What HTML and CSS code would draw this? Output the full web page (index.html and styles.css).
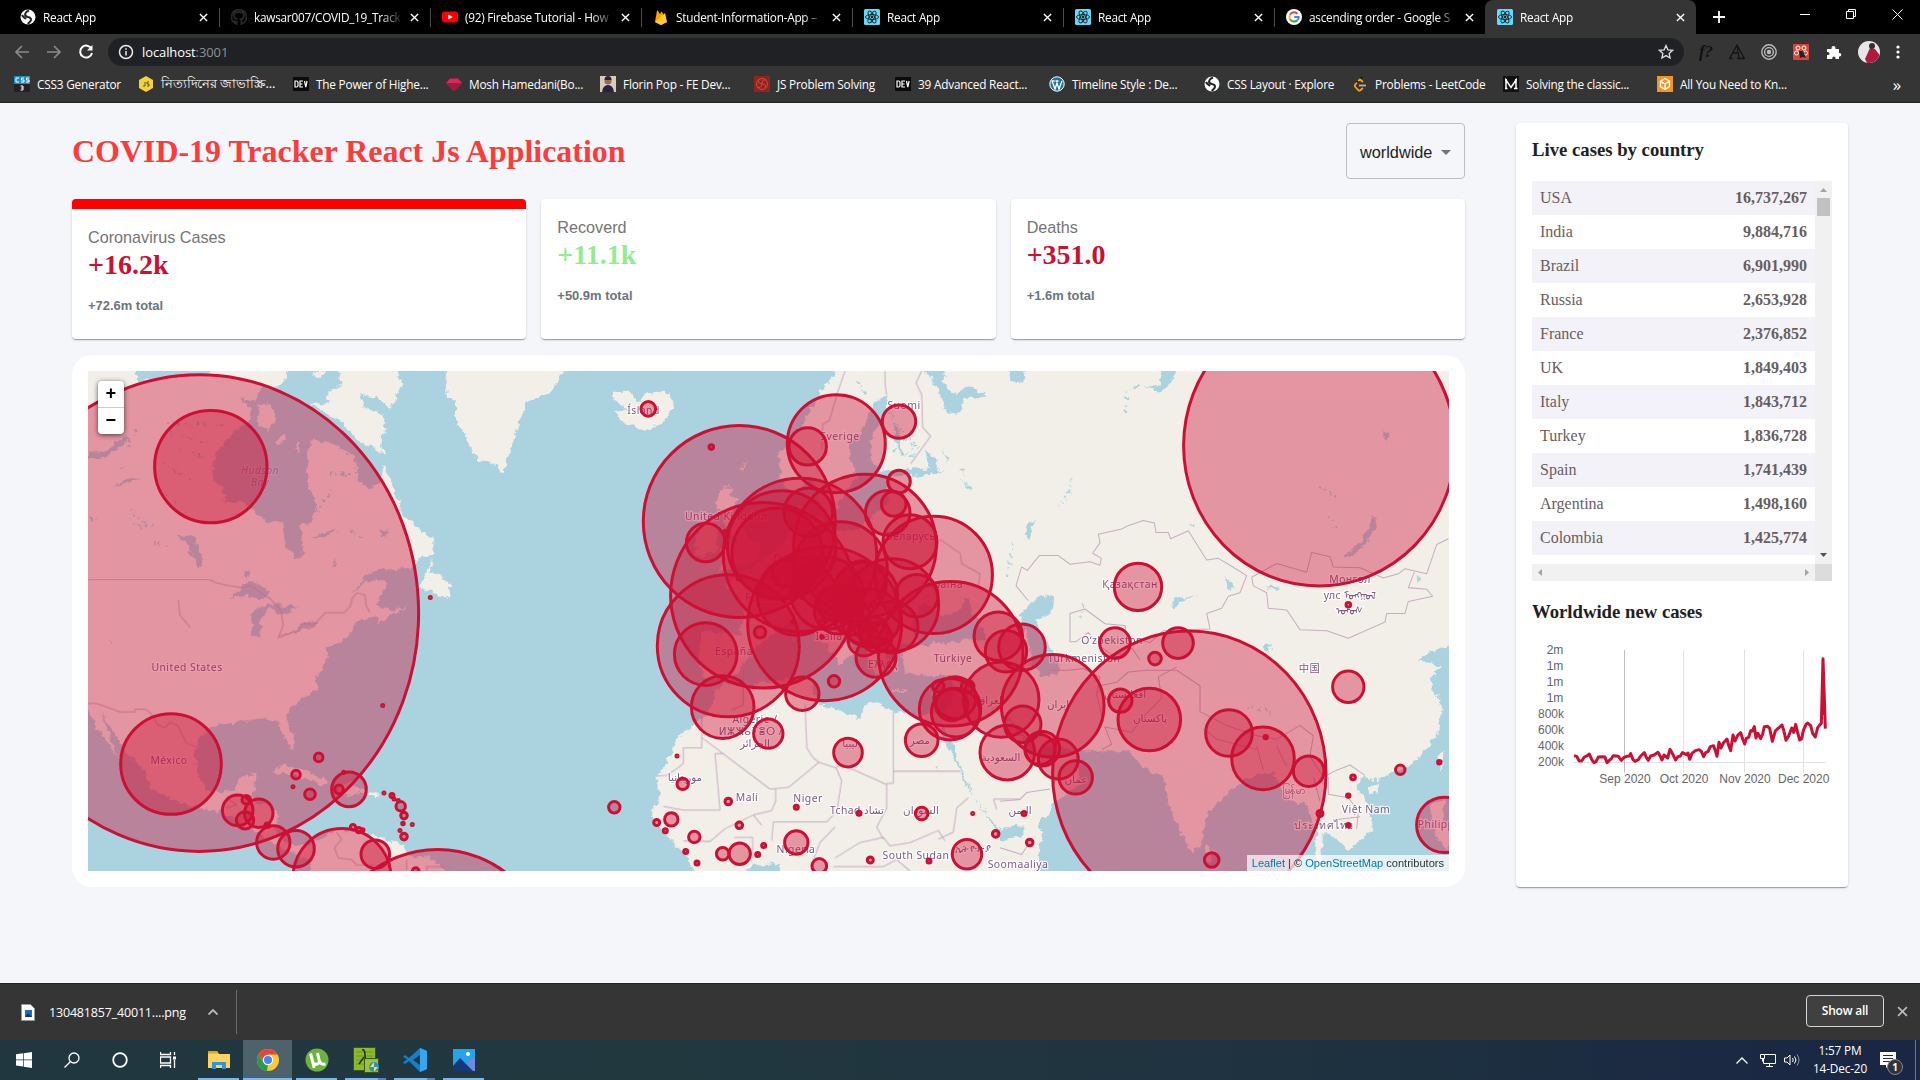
FILE: index.html
```html
<!DOCTYPE html>
<html lang="en">
<head>
<meta charset="utf-8">
<title>React App</title>
<link rel="stylesheet" href="styles.css">
</head>
<body>
<svg width="0" height="0" class="defs">
  <symbol id="react" viewBox="0 0 16 16"><rect width="16" height="16" rx="1.5" fill="#61dafb"/><g fill="none" stroke="#20232a" stroke-width=".9"><ellipse cx="8" cy="8" rx="6.6" ry="2.5"/><ellipse cx="8" cy="8" rx="6.6" ry="2.5" transform="rotate(60 8 8)"/><ellipse cx="8" cy="8" rx="6.6" ry="2.5" transform="rotate(120 8 8)"/></g><circle cx="8" cy="8" r="1.4" fill="#20232a"/></symbol>
  <symbol id="globe" viewBox="0 0 16 16"><circle cx="8" cy="8" r="7.5" fill="#fff"/><path d="M9 1.5C5 3 4 6 6.500 7.500c2 1 5 .5 4.500 3.500-.5 2-2.500 3-3 4M2 6c1 2 3 3 4 4" fill="none" stroke="#222" stroke-width="2"/></symbol>
  <symbol id="dev" viewBox="0 0 16 16"><rect y="1" width="16" height="14" fill="#0a0a0a"/><path d="M2 5v6h1.500q1.500 0 1.500-1.500v-3Q5 5 3.500 5zM10 5H7v6h3M7 8h2.500M11.500 5l1.300 6 1.300-6" fill="none" stroke="#fff" stroke-width="1.200"/></symbol>
  <symbol id="x" viewBox="0 0 10 10"><path d="M1 1l8 8M9 1l-8 8" stroke="currentColor" stroke-width="1.500"/></symbol>
</svg>

<header class="browser">
  <div class="tabs">
    <div class="tab"><svg class="fav"><use href="#globe"/></svg><span>React App</span><svg class="close"><use href="#x"/></svg></div>
    <div class="tab"><svg class="fav" viewBox="0 0 16 16"><path d="M8 .5a7.500 7.500 0 0 0-2.400 14.600v-2.200c-2 .4-2.600-1-3-1.700M8 .5a7.500 7.500 0 0 1 2.400 14.600v-3c0-.9-.3-1.400-.7-1.700C12 10 13 9 13 6.800c0-1-.3-1.800-.9-2.400V2.500L10 3.300a7 7 0 0 0-4 0L3.900 2.500v1.900C3.300 5 3 5.800 3 6.800 3 9 4 10 6.300 10.400" fill="none" stroke="#24292e" stroke-width="1.800"/></svg><span>kawsar007/COVID_19_Track</span><svg class="close"><use href="#x"/></svg></div>
    <div class="tab"><svg class="fav" viewBox="0 0 16 16"><rect y="2.500" width="16" height="11" rx="3" fill="#f00"/><path d="M6.300 5.500v5l4.400-2.500z" fill="#fff"/></svg><span>(92) Firebase Tutorial - How</span><svg class="close"><use href="#x"/></svg></div>
    <div class="tab"><svg class="fav" viewBox="0 0 16 16"><path d="M2 13L4 1.500q.3-.6.7 0L7 5l1.300-2.300q.4-.5.700 0L14 13l-6 3z" fill="#ffa000"/><path d="M2 13l9.500-8.500q.6-.4.8.2L14 13l-6 3z" fill="#ffca28"/></svg><span>Student-Information-App –</span><svg class="close"><use href="#x"/></svg></div>
    <div class="tab"><svg class="fav"><use href="#react"/></svg><span>React App</span><svg class="close"><use href="#x"/></svg></div>
    <div class="tab"><svg class="fav"><use href="#react"/></svg><span>React App</span><svg class="close"><use href="#x"/></svg></div>
    <div class="tab"><svg class="fav" viewBox="0 0 16 16"><circle cx="8" cy="8" r="8" fill="#fff"/><g fill="none" stroke-width="2"><path d="M11.500 4.800A4.700 4.700 0 0 0 4 5.700" stroke="#ea4335"/><path d="M4 5.700a4.700 4.700 0 0 0 0 4.600" stroke="#fbbc05"/><path d="M4 10.300a4.700 4.700 0 0 0 7.300 1" stroke="#34a853"/><path d="M11.300 11.300A4.500 4.500 0 0 0 12.700 8H8.200" stroke="#4285f4"/></g></svg><span>ascending order - Google S</span><svg class="close"><use href="#x"/></svg></div>
    <div class="tab active"><svg class="fav"><use href="#react"/></svg><span>React App</span><svg class="close"><use href="#x"/></svg></div>
    <svg class="plus" viewBox="0 0 12 12"><path d="M6 0v12M0 6h12" stroke="#fff" stroke-width="1.800"/></svg>
    <div class="window-controls">
      <svg width="10" height="10"><path d="M0 5.500h10" stroke="#fff"/></svg>
      <svg width="10" height="10" fill="none" stroke="#fff"><path d="M.5 2.500h7v7h-7zM2.500 2.500v-2h7v7h-2"/></svg>
      <svg width="11" height="11"><path d="M.5.5l10 10M10.500.5l-10 10" stroke="#fff"/></svg>
    </div>
  </div>
  <div class="toolbar">
    <svg width="16" height="16" fill="none" stroke="#8a8a8a" stroke-width="1.700"><path d="M15 8H2M8 2L2 8l6 6"/></svg>
    <svg width="16" height="16" fill="none" stroke="#8a8a8a" stroke-width="1.700"><path d="M1 8h13M8 2l6 6-6 6"/></svg>
    <svg width="16" height="16" fill="none" stroke="#fff" stroke-width="2"><path d="M13.500 4.800A6 6 0 1 0 14 9"/><path d="M14.500 1v5.500H9z" fill="#fff" stroke="none"/></svg>
    <div class="omnibox">
      <svg width="16" height="16" fill="none" stroke="#e8eaed" stroke-width="1.500"><circle cx="8" cy="8" r="6.500"/><path d="M8 7v4.500M8 4.300v1.500"/></svg>
      <span class="url">localhost<i>:3001</i></span>
      <svg width="16" height="16" fill="none" stroke="#dcdcdc" stroke-width="1.300"><path d="M8 1.500l1.900 4.300 4.700.5-3.500 3.100 1 4.600L8 11.600 3.900 14l1-4.600L1.400 6.300l4.700-.5z"/></svg>
    </div>
    <div class="extensions">
      <b class="ext-f">f?</b>
      <svg width="16" height="16" fill="none" stroke="#151515" stroke-width="1.300"><path d="M1 14L8 1l2 13M4 9h5M8 1l7 13M0 14.500h4M8 14.500h8"/></svg>
      <svg width="16" height="16" fill="none" stroke="#bbb" stroke-width="1.400"><circle cx="8" cy="8" r="7.200"/><circle cx="8" cy="8" r="4.400"/><circle cx="8" cy="8" r="1.500" fill="#bbb"/></svg>
      <svg width="16" height="16"><rect width="16" height="16" rx="1" fill="#db4437"/><g fill="none" stroke="#fff"><circle cx="5" cy="4" r="2"/><circle cx="11" cy="4" r="2"/><circle cx="3.500" cy="9" r="2"/><circle cx="12.500" cy="9" r="2"/></g><path d="M6 7l4 0 3 7-3-1-3 1z" fill="#222"/></svg>
      <svg width="16" height="16" fill="#fff"><path d="M1 5h4.500V4a2 2 0 1 1 4 0v1H13v4h.500a1.800 1.800 0 0 1 0 3.600H13V15H9.500v-1a1.600 1.600 0 0 0-3.200 0v1H1v-4h1a1.500 1.500 0 0 0 0-3H1z"/></svg>
      <svg width="22" height="22" viewBox="0 0 22 22"><circle cx="11" cy="11" r="11" fill="#e7e5ea"/><path d="M12 7l5 1 4.500 6a11 11 0 0 1-12.500 7.800L7 18z" fill="#b3183f"/><circle cx="14" cy="5" r="3" fill="#3c2c2c"/></svg>
      <svg width="4" height="16" fill="#fff"><circle cx="2" cy="3" r="1.600"/><circle cx="2" cy="8" r="1.600"/><circle cx="2" cy="13" r="1.600"/></svg>
    </div>
  </div>
  <nav class="bookmarks">
    <a><svg viewBox="0 0 16 16"><rect width="16" height="8" fill="#1e8fc0"/><rect y="8" width="16" height="8" fill="#222"/><path d="M5 2H2v4h3M10 2H7.500v2H10v2H7M15 2h-2.500v2H15v2h-3M6.500 10H9v4H6.500M7 12h2" fill="none" stroke="#fff"/></svg>CSS3 Generator</a>
    <a class="bn"><svg viewBox="0 0 16 16"><path d="M8 0l7 4v8l-7 4-7-4V4z" fill="#f2d43a"/><path d="M7 6v4H5M11 6H9v2h2v2H9" fill="none" stroke="#554"/></svg>নিত্যদিনের জাভাস্ক্রি...</a>
    <a><svg><use href="#dev"/></svg>The Power of Highe...</a>
    <a><svg viewBox="0 0 16 16"><path d="M4 2.500h8L16 7l-8 8-8-8z" fill="#e0245e"/><path d="M0 7h16L8 15z" fill="#a5183f"/></svg>Mosh Hamedani(Bo...</a>
    <a><svg viewBox="0 0 16 16"><rect width="16" height="16" fill="#d8cbb8"/><circle cx="8" cy="5" r="3.500" fill="#9a6b50"/><path d="M2 16q1-7 6-7t6 7zM4.500 4q0-4 3.500-4t3.500 4z" fill="#2b2140"/></svg>Florin Pop - FE Dev...</a>
    <a><svg viewBox="0 0 16 16"><rect width="16" height="16" fill="#8e2620"/><g fill="none" stroke="#d8443a"><circle cx="8" cy="8" r="5.500"/><path d="M8 8q0-5 4-4M8 8q5 0 3 4M8 8q-1 5-5 3M8 8Q3 7 5 3"/></g></svg>JS Problem Solving</a>
    <a><svg><use href="#dev"/></svg>39 Advanced React...</a>
    <a><svg viewBox="0 0 16 16"><circle cx="8" cy="8" r="7.200" fill="#21759b" stroke="#fff"/><path d="M3 5l3 8 2-6 2 6 3-8M2.500 5h3M6.500 5h3" fill="none" stroke="#fff" stroke-width="1.300"/></svg>Timeline Style : De...</a>
    <a><svg><use href="#globe"/></svg>CSS Layout · Explore</a>
    <a><svg viewBox="0 0 16 16" fill="none" stroke-width="1.800"><path d="M10 1L4 7.500" stroke="#111"/><path d="M5 6.500L3 9q-.5 1 .3 2l3 3.200q1 .8 2 0L11 12M6 5l2-1.500 3 2.500" stroke="#f89f1b"/><path d="M7 9.500h7" stroke="#b3b3b3"/></svg>Problems - LeetCode</a>
    <a><svg viewBox="0 0 16 16"><rect width="16" height="16" fill="#111"/><path d="M3 12.500V4l5 7.500L13 4v8.500M2 12.500h2.500M11 12.500h3.500M2 3.700h2M12 3.700h2" fill="none" stroke="#fff" stroke-width="1.500"/></svg>Solving the classic...</a>
    <a><svg viewBox="0 0 16 16"><rect width="16" height="16" fill="#f7931e"/><path d="M8 2.500l4.500 2.700v5.500L8 13.500l-4.500-2.800V5.200zM4 5.500L8 8l4-2.500M8 8v5" fill="none" stroke="#fff" stroke-width="1.400"/></svg>All You Need to Kn...</a>
    <span class="more">»</span>
  </nav>
</header>

<main class="app">
  <section class="left">
    <div class="app-header">
      <h1>COVID-19 Tracker React Js Application</h1>
      <div class="dropdown">worldwide<svg width="10" height="5"><path d="M0 0h10L5 5z" fill="#757575"/></svg></div>
    </div>
    <div class="stats">
      <article class="card selected"><p>Coronavirus Cases</p><h2>+16.2k</h2><h6>+72.6m total</h6></article>
      <article class="card"><p>Recoverd</p><h2 class="green">+11.1k</h2><h6>+50.9m total</h6></article>
      <article class="card"><p>Deaths</p><h2>+351.0</h2><h6>+1.6m total</h6></article>
    </div>
    <div class="map-card">
      <div class="map">
        <svg class="world" viewBox="88 371 1361 500">
          <defs><filter id="rough" filterUnits="userSpaceOnUse" x="80" y="360" width="1380" height="520"><feTurbulence type="fractalNoise" baseFrequency=".16" numOctaves="3" seed="4"/><feDisplacementMap in="SourceGraphic" scale="8" xChannelSelector="R" yChannelSelector="G"/></filter></defs>
          <g filter="url(#rough)">
            <g transform="translate(70 350) scale(.33333 .34439)">
              <g class="land">
                <path d="M0,20H185L205,95 240,85 300,80 400,75 530,20H655L650,85 610,110 700,150 860,300 935,380 940,335 965,390 1000,480 1060,530 1090,550 1090,590 1040,612 1030,632 905,640 840,710 880,675 940,665 945,690 920,740 960,760 1020,740 925,795 915,770 860,790 835,835 775,865 765,910 735,960 745,980 700,1010 660,1040 650,1070 675,1130 670,1165 640,1120 625,1080 570,1070 515,1080 425,1090 390,1120 375,1180 380,1230 410,1275 440,1285 490,1275 510,1240 560,1230 555,1270 540,1300 560,1315 600,1320 622,1345 615,1400 650,1430 700,1440 750,1425 800,1392 860,1398 950,1420 1000,1440 1010,1470 1080,1470 1150,1540H720L725,1475 690,1470 620,1440 560,1400 480,1350 400,1330 330,1315 240,1270 225,1220 170,1170 130,1110 90,1045 130,1150 150,1190 110,1140 54,1050 0,1040z"/>
                <path d="M725,60h40l-8,18h-25zM800,50H970L997,100 960,172 920,140 870,128 880,160 940,190 950,230 930,258 942,302 860,262 820,210 722,157 780,152 770,128 815,100z"/>
                <path d="M1123,50L1130,130 1155,150 1155,190 1200,280 1225,325 1260,320 1300,357 1320,290 1345,220 1370,150 1440,125 1465,90 1485,50z"/>
                <path d="M1090,600L1045,690 1090,705 1142,722 1140,690 1110,655 1078,642zM600,1225L650,1203 700,1220 782,1256 755,1262 690,1235zM800,1265l40-10 45,30-75,10zM897,1285h26v10h-26z"/>
              </g>
              <g class="water">
                <path d="M498,235L540,205 545,175 510,140 555,150 575,110 620,112 700,150 760,190 840,260 900,320 935,380 895,405 860,375 855,315 820,290 770,265 720,265 710,330 720,400 738,450 725,500 690,510 702,560 695,600 680,605 650,575 640,500 600,500 550,470 520,440 465,445 460,400 430,385 428,330 450,280z"/>
                <path d="M475,720L540,670 600,700 590,722 520,715zM545,830L548,760 590,738 680,745 640,775 600,745 575,770 570,830zM620,835l70-28 3-12 50-8-10 15zM320,540l50-5 28,75-10,22-40-70zM54,295l50,0 60,-45 20,8-80,55-50,8zM525,640h14v16h-14zM115,840l16,12-4,8zM125,400l50-30 35,4-50,15zM720,545l60-20 30-8-40,25zM780,630l20-25-5,15zM925,520l30,5-10,20z"/>
              </g>
              <path class="lakes" d="M290,210l190,10M300,240l120,30M330,290l80,20M280,330l90,50M290,420l40,30M180,460l60,60M150,340l10,0M200,230l-30,60M190,510l60,0M740,470l50,-70M840,520l40,30M930,540l30,-20M780,360l70,0M60,490l30,3M250,560l50,10"/>
              <path class="land" d="M565,160l30-5 25,40-25,40-30-15zM615,265l25-20 5,15-20,15zM676,270h12v25h-10z"/>
            </g>
            <g transform="translate(540 350) scale(.33333 .34439)">
              <g class="land">
                <path d="M220,115L270,122 292,150 320,125 380,118 402,165 370,210 310,232 250,210 225,180 265,172 225,150z"/>
                <path d="M548,396L525,450 548,480 560,520 595,560 540,580 560,610 539,640 600,628 656,610 662,565 620,540 602,500 575,475 600,430 570,425 575,398zM463,600L530,590 532,510 500,493 465,540zM605,350l12-30-4,35z"/>
                <path d="M895,45L873,80 838,130 786,217 718,300 722,380 752,415 790,400 812,366 829,415 846,475 873,490 900,440 950,366 930,320 930,270 975,220 1000,150 1043,135 1030,190 992,260 992,320 1026,352 1145,342 1145,360 1043,369 1043,445 957,520 838,531 846,485 800,490 779,445 769,504 730,560 664,614 606,648 553,680 600,720 613,774 600,825 485,815 475,902 490,950 537,958 590,942 627,885 671,844 725,801 785,776 843,835 903,917 915,900 947,874 865,795 843,753 860,752 906,797 964,841 985,900 1008,948 1043,921 1026,863 1080,855 1128,852 1111,801 1154,729 1213,774 1256,755 1282,713 1300,760 1343,840 1248,841 1128,860 1080,880 1094,938 1154,948 1239,946 1237,1000 1218,1049 1140,1060 1050,1045 1010,1020 980,1025 960,1070 880,1040 835,1030 815,985 825,952 780,950 700,962 600,975 545,965 500,1060 430,1110 400,1150 380,1200 345,1240 360,1290 340,1340 340,1370 380,1410 430,1460 480,1540H1500V40z"/>
                <path d="M1170,992h35v8h-30zM1050,985h50v8h-45zM757,790l12,30-8,20-8-15z"/>
              </g>
              <g class="water">
                <path d="M1205,1080L1232,1130 1268,1225 1300,1300 1375,1385 1450,1380V1415L1380,1420 1355,1372 1292,1290 1250,1200 1200,1115zM590,1540L640,1495 712,1490 730,1540z"/>
                <path d="M1145,50L1200,115 1215,180 1255,185 1272,140 1340,132 1285,105 1240,130 1205,90 1215,50zM1155,290l30,30 10,30-30-10zM1100,345l80,0 30,10-80,10zM1060,205l20,40 8,70-18-40zM1210,285l15,30-5,12zM1250,345l30,0-10,15zM1275,385l22,18-8,8zM1400,50h25l5,40-20,-5z"/>
                <path d="M1130,852l40-8 60,-8 60,6-70,8zM1265,375l15,18 15,12-12,4z"/>
              </g>
              <path class="lakes" d="M1050,180l50,90M1080,230l60,60M1110,270l20,50M950,90l30,40M1060,290l60,20M1410,610l10,40M1190,1210l-10,10"/>
            </g>
            <g transform="translate(1000 350) scale(.33333 .34439)">
              <g class="land">
                <path d="M0,40H1400V850L1290,875 1260,900 1320,920 1290,960 1330,1040 1310,1120 1240,1200 1130,1250 1085,1240 1070,1270 1110,1330 1118,1390 1045,1455 1000,1410 965,1400 965,1540H945L950,1400 915,1310 890,1320 850,1290 820,1225 740,1240 700,1275 625,1340 600,1440 575,1462 510,1340 490,1235 430,1215 390,1165 300,1165 225,1160 240,1260 165,1310 150,1350 0,1395z"/>
                <path d="M-10,1425L130,1398 120,1450 60,1540H-10zM1105,1270l35-12-10,25-22,8zM1310,1185l22-20-10,55zM615,1440l20,10-5,35-18-10zM1290,1320l45-15-5,60 30,50-20,40-40-60z"/>
              </g>
              <g class="water">
                <path d="M55,770L120,713 165,720 150,765 110,785 120,830 150,860 175,900 175,942 130,947 95,910 90,860zM15,1060L70,1110 100,1165 160,1150 215,1160 200,1180 110,1180 60,1120z"/>
                <path d="M20,50h55l-5,45-40-5zM425,105l50,0 10-50h45l-15,40-30,25zM1030,600L1080,560 1115,500 1125,480 1128,510 1100,560 1050,602zM510,745l15-25 80-5-55,8-25,30zM795,685l45,5-10,10zM80,545l5-50 20,0-15,50zM670,655l35,35-15,5zM1250,660h14l-10,20zM1145,240h20v25zM790,855l28,3-20,18z"/>
              </g>
              <path class="lakes" d="M375,180l5,-60 40,-20M215,375l-10,50 -30,30M40,560l-20,100M985,480l30,50M960,395l60,40M740,1040l80,10M250,740l-5,40M575,505l10,10"/>
            </g>
          </g>
          <g class="borders">
            <path transform="translate(70 350) scale(.33333 .34439)" d="M54,666H418L435,675 480,685 520,690 540,684 600,722 632,755 640,800 625,835 690,812 695,795 735,795 765,763 822,763 840,745 848,718 862,705 885,712 888,742 900,762M54,1026H80L150,1051H195V1043H227L250,1062 262,1088 285,1097 300,1081 322,1090 350,1142 385,1155M470,1330L500,1320 470,1300 490,1290M800,1400l15,20-22,25 12,30 40,5 15,15 50,0M325,725l5,45 30,35M1010,1480l0,30M1070,1513V1500h70"/>
            <path transform="translate(540 350) scale(.33333 .34439)" d="M915,61L892,125 868,205 848,215 845,290M1035,61V100L1040,130M1145,61L1128,95 1145,130 1148,225 1172,250 1112,330M485,1125L690,1275 745,1270 837,1197 888,1213 905,1203 1040,1262M485,1060V1155H430V1200L412,1215 378,1235 343,1237M525,1172h27M525,1172L540,1336H430L370,1325M707,1275V1310L695,1337 640,1350 555,1390 510,1427 430,1425M795,1030L800,1140 800,1155 820,1185 837,1197M1060,1048V1258H1040V1330L1010,1385 1030,1420M1060,1223H1262M888,1213L905,1250 890,1340 860,1370 700,1370 695,1425M640,1350l25,30M583,1415h55v60M885,1385L840,1430 820,1480M885,1475L960,1430 1030,1415 1050,1440 1110,1430 1195,1395 1215,1425M1285,1300L1250,1330 1240,1400 1195,1420M880,1500H1030L1070,1480 1110,1513M1360,1304H1440M1360,1304l10,30M610,930V1030L575,1045M1200,550l60,40 5,30 55,30-5,35"/>
            <path transform="translate(1000 350) scale(.33333 .34439)" d="M85,728L48,685 65,630 82,640 118,597 175,597 210,622 270,615 300,625 304,605 278,590 300,560 295,535 365,520 380,512 430,495 463,502 468,530 505,530 512,548 565,525 620,610 655,605 690,625 740,655 720,705 685,715 665,750 620,765 630,810 490,815 450,850 380,830 375,800 315,795 255,752 210,765V847H228M228,847L265,820 300,860 350,895 395,865 420,900M755,660L830,620 920,645 935,588 990,600 1000,630 1080,632 1150,662 1195,650 1215,635 1280,650 1310,565 1345,548M755,660L760,685 800,705 805,750 860,755 900,812 980,815 1045,837 1155,790 1160,765 1215,765 1225,730 1298,715 1280,695 1225,690 1243,645M300,975L350,965 385,935 440,930 530,930 600,975 600,1050 680,1090 770,1120 830,1130 900,1090 940,1120 930,1180 970,1240 1010,1220 1050,1205 1095,1235M305,1160l30-15-20-50 80,15 40-50 50-50-10-60 55-30M150,930L205,930 250,925 300,950 290,1000 310,1080M0,1310L60,1305 80,1285 150,1275M610,1100l40,30 120,30M770,1150l20,70M830,1150l30,60M0,1445L65,1465 85,1435M985,1240v50l60,10 30,40-5,50M1000,1365l80-10M940,1240l20,70"/>
          </g>
          <g id="labels" class="labels"></g>
          <g id="markers" class="markers"></g>
        </svg>
        <div class="zoom"><span>+</span><span>−</span></div>
        <div class="attribution"><a>Leaflet</a> | © <a>OpenStreetMap</a> contributors</div>
      </div>
    </div>
  </section>

  <aside class="panel">
    <h3>Live cases by country</h3>
    <div class="scroller">
      <div class="rows">
        <div><span>USA</span><b>16,737,267</b></div>
        <div><span>India</span><b>9,884,716</b></div>
        <div><span>Brazil</span><b>6,901,990</b></div>
        <div><span>Russia</span><b>2,653,928</b></div>
        <div><span>France</span><b>2,376,852</b></div>
        <div><span>UK</span><b>1,849,403</b></div>
        <div><span>Italy</span><b>1,843,712</b></div>
        <div><span>Turkey</span><b>1,836,728</b></div>
        <div><span>Spain</span><b>1,741,439</b></div>
        <div><span>Argentina</span><b>1,498,160</b></div>
        <div><span>Colombia</span><b>1,425,774</b></div>
      </div>
      <div class="vbar"><svg width="7" height="4"><path d="M0 4h7L3.500 0z" fill="#a3a3a3"/></svg><i></i><svg width="7" height="4"><path d="M0 0h7L3.500 4z" fill="#505050"/></svg></div>
      <div class="hbar"><svg width="4" height="7"><path d="M4 0v7L0 3.500z" fill="#a3a3a3"/></svg><svg width="4" height="7"><path d="M0 0v7l4-3.500z" fill="#a3a3a3"/></svg></div>
      <div class="corner"></div>
    </div>
    <h3 class="chart-title">Worldwide new cases</h3>
    <svg class="chart" viewBox="96 180 900 450">
      <g fill="none" stroke="#e2e2e2" stroke-width="3"><path d="M550.500 210V578M733.500 210V578M910.500 210V578M219 547.500H978"/><path d="M373.500 210V578" stroke="#bdbdbd"/></g>
      <path fill="none" stroke="#cc1034" stroke-width="9" stroke-linejoin="round" d="M222,527L230,529 237,542 245,543 253,531 262,527 268,522 275,538 282,548 288,545 295,531 303,530 315,531 321,548 328,541 334,536 340,527 355,529 364,541 371,533 380,529 388,528 392,521 399,539 405,544 415,539 422,528 433,518 439,532 445,541 452,528 462,525 474,517 480,527 486,540 492,525 503,534 510,508 517,520 527,540 534,530 541,528 547,518 560,524 564,519 569,538 576,520 586,512 598,509 604,514 611,530 617,518 624,515 631,500 641,497 646,512 651,529 657,487 663,504 670,489 681,477 686,496 692,512 699,465 705,483 713,466 722,458 728,477 734,492 739,475 746,472 752,452 757,453 763,440 768,474 774,460 782,476 788,462 793,440 803,439 809,445 817,484 826,453 832,447 838,442 846,435 851,450 858,481 866,468 875,444 881,457 887,433 893,458 899,480 905,476 910,452 918,433 923,429 932,437 938,460 946,471 953,443 960,434 964,430 969,236 976,446M969,240L971,405"/>
      <g fill="#666" font-size="36" text-anchor="end"><text x="190" y="222">2m</text><text x="190" y="270">1m</text><text x="190" y="318">1m</text><text x="190" y="366">1m</text><text x="192" y="414">800k</text><text x="192" y="462">600k</text><text x="192" y="510">400k</text><text x="192" y="558">200k</text></g>
      <g fill="#666" font-size="36" text-anchor="middle"><text x="375" y="609">Sep 2020</text><text x="552" y="609">Oct 2020</text><text x="735" y="609">Nov 2020</text><text x="911" y="609">Dec 2020</text></g>
    </svg>
  </aside>
</main>

<div class="downloads">
  <svg width="14" height="17"><path d="M.5.500h9l4 4v12H.5z" fill="#fff" stroke="#999"/><rect x="4" y="6" width="7" height="7" fill="#1b6fc4"/><path d="M4 13l3-4 4 4z" fill="#0c3a70"/></svg>
  <span class="file">130481857_40011....png</span>
  <svg width="10" height="6" fill="none" stroke="#bbb" stroke-width="1.800"><path d="M.5 5.500L5 1l4.500 4.500"/></svg>
  <i class="sep"></i>
  <button>Show all</button>
  <svg class="dismiss"><use href="#x"/></svg>
</div>

<footer class="taskbar">
  <div class="task"><svg width="16" height="16" fill="#fff"><path d="M0 2.300l7-1v6.300H0zM7.700 1.200L16 0v7.600H7.700zM0 8.300h7v6.300l-7-1zM7.700 8.300H16V16l-8.300-1.200z"/></svg></div>
  <div class="task"><svg width="16" height="16" fill="none" stroke="#fff" stroke-width="1.300"><circle cx="10" cy="6" r="5"/><path d="M6.500 9.500L.5 15.500"/></svg></div>
  <div class="task"><svg width="16" height="16" fill="none" stroke="#fff" stroke-width="1.800"><circle cx="8" cy="8" r="6.800"/></svg></div>
  <div class="task"><svg width="16" height="16" fill="none" stroke="#fff" stroke-width="1.300"><path d="M.5 0v2.500h10V0M.5 5h10v6H.5zM.5 16v-2.500h10V16M14.500 0v3M14.500 8v8"/><path d="M13 4.500h3v3h-3z" fill="#fff" stroke="none"/></svg></div>
  <div class="task open"><svg width="22" height="18"><path d="M0 0h9l2 3h11v14H0z" fill="#ffd45e"/><path d="M0 0h9l1 2.500H0z" fill="#e8a400"/><path d="M4 18v-7h14v7h-4v-4H8v4z" fill="#2f94e0"/></svg></div>
  <div class="task open current"><svg width="22" height="22"><circle cx="11" cy="11" r="11" fill="#fbc934"/><path d="M1.500 5.500A11 11 0 0 1 20.500 5.500H11L7 13z" fill="#e2463a"/><path d="M1.500 5.500L7 14l4 2-1 6A11 11 0 0 1 1.500 5.500z" fill="#269b4c"/><circle cx="11" cy="11" r="5.200" fill="#fff"/><circle cx="11" cy="11" r="4" fill="#4285f4"/></svg></div>
  <div class="task open"><svg width="24" height="24" fill="none"><circle cx="12" cy="12" r="11.500" fill="#6cb33f"/><path d="M5.500 5.500L8 15q4 3 6.500-1L12.500 5M14.500 13q1 4 6 3M8 14l1 6" stroke="#fff" stroke-width="3"/></svg></div>
  <div class="task open multi"><svg width="26" height="26"><path d="M.5.500h22v23H.5z" fill="#8db92e" stroke="#3e5512"/><path d="M3 5h17M3 9h17M3 13h17M3 17h10" stroke="#6d9620"/><path d="M9 3q3-1 3 5t5 8M11 10l-5 7" stroke="#223208" stroke-width="1.500" fill="none"/><path d="M11.500 11.500h14v14h-14z" fill="#9ac23c" stroke="#3e5512"/><circle cx="21" cy="20" r="5" fill="#2a8ed6"/><path d="M17 20l4-5v5h4l-4 5v-5z" fill="#ffe135"/></svg></div>
  <div class="task open multi"><svg width="24" height="24"><path d="M17 0l7 3v18l-7 3L6 13l-4 3-2-1.500 4-3-4-3L2 7l4 3z" fill="#1480cc"/><path d="M17 0l7 3v18l-7 3z" fill="#35a6f2"/><path d="M17 7v10l-7-5z" fill="#213944"/></svg></div>
  <div class="task open"><svg width="22" height="22"><rect width="22" height="22" fill="#26a4ea"/><path d="M22 8v14H8l7-9z" fill="#7189df"/><path d="M0 17l7-8 13 13H0z" fill="#123a78"/><circle cx="15" cy="5" r="2" fill="#fff"/></svg></div>
  <div class="tray">
    <svg width="12" height="7" fill="none" stroke="#fff" stroke-width="1.300"><path d="M.5 6.500L6 1l5.500 5.500"/></svg>
    <svg width="16" height="14" fill="none" stroke="#fff"><path d="M5 1.500h10.500v9H3.500V6M9.500 10.500v3M6 13.500h7M.5 1.500h4v4h-4zM2.500 5.500v3"/></svg>
    <svg width="16" height="14" fill="none" stroke="#fff"><path d="M.5 5v4H3l3 3V2L3 5zM8.500 5q1.500 2 0 4M10.500 3.500q3 3.500 0 7"/><path d="M13 1.500q4 5.500 0 11" stroke="#8996a5"/></svg>
    <div class="clock">1:57 PM<br>14-Dec-20</div>
    <div class="notice"><svg width="17" height="17"><path d="M0 0h16v13H9l-3 3v-3H0z" fill="#fff"/><path d="M3 3.500h10M3 6.500h10M3 9.500h7" stroke="#1b2a42"/></svg><b>1</b></div>
  </div>
</footer>
<script src="map.js"></script>
</body>
</html>
```
FILE: styles.css
```css
* { box-sizing: border-box; }
body { margin: 0; width: 1920px; height: 1080px; overflow: hidden; display: flex; flex-direction: column; background: #f5f6fa; font-family: "Liberation Sans", sans-serif; }
h1, h2, h3, h6, p { margin: 0; }
svg { flex: none; display: block; }
.defs { position: absolute; }

.browser, .downloads, .taskbar { font-family: "Open Sans", "Noto Sans", sans-serif; font-size: 11.8px; color: #fff; }
.browser { height: 103px; background: #353535; border-bottom: 1px solid #232427; letter-spacing: -.15px; }
.tabs { height: 34px; background: #000; display: flex; align-items: center; padding-left: 8px; }
.tab { width: 211px; height: 34px; display: flex; align-items: center; padding: 0 11px 0 12px; gap: 7px; position: relative; }
.tab + .tab::before { content: ""; position: absolute; left: 0; top: 8px; width: 1px; height: 19px; background: #4a4a4a; }
.tab span { flex: 1; white-space: nowrap; overflow: hidden; letter-spacing: -.25px; -webkit-mask-image: linear-gradient(90deg, #000 85%, transparent); }
.tab.active { background: #353535; border-radius: 8px 8px 0 0; }
.tab.active::before { display: none; }
.fav { width: 16px; height: 16px; }
.close { width: 9px; height: 9px; color: #fff; }
.plus { width: 12px; height: 12px; margin-left: 17px; }
.window-controls { margin-left: auto; display: flex; gap: 36px; padding: 0 17px 6px 0; }
.toolbar { height: 36px; display: flex; align-items: center; padding: 0 20px 0 14px; gap: 16px; }
.omnibox { width: 1576px; height: 28px; margin-left: -2px; border-radius: 14px; background: #202124; display: flex; align-items: center; padding: 0 10px; gap: 8px; font-size: 13px; letter-spacing: -.1px; }
.url { flex: 1; }
.url i { font-style: normal; color: #8f9093; }
.extensions { flex: 1; display: flex; align-items: center; justify-content: space-between; margin-left: -1px; }
.ext-f { font: italic bold 17px "Liberation Serif", serif; color: #111; }
.bookmarks { height: 28px; display: grid; grid-template-columns: 124px 155px 153px 154px 154px 141px 154px 155px 148px 151px 154px 1fr auto; align-items: center; padding: 0 19px 0 14px; }
.bookmarks a { display: flex; align-items: center; gap: 7px; white-space: nowrap; letter-spacing: -.2px; }
.bookmarks .bn { font-size: 13px; }
.bookmarks svg { width: 16px; height: 16px; }
.more { font-size: 17px; }

.app { height: 880px; display: flex; justify-content: space-between; align-items: flex-start; padding: 20px 72px 0; }
.left { width: 1393px; }
.app-header { height: 56px; display: flex; justify-content: space-between; align-items: center; margin-bottom: 20px; }
h1 { font: bold 31.950px "Liberation Serif", serif; color: #fc3c3c; padding-top: 1px; }
.dropdown { width: 119px; height: 56px; border: 1px solid #bdbec2; border-radius: 4px; display: flex; align-items: center; justify-content: space-between; padding: 2px 13px 0; font-size: 16.300px; color: #212121; }
.stats { display: grid; grid-template-columns: repeat(3, 1fr); gap: 15px; }
.card, .panel { background: #fff; border-radius: 4px; box-shadow: 0 2px 1px -1px rgba(0,0,0,.2), 0 1px 1px rgba(0,0,0,.14), 0 1px 3px rgba(0,0,0,.12); }
.card { height: 140px; padding: 19px 16px; }
.card.selected { border-top: 10px solid #f00; }
.card p { font-size: 16.200px; line-height: 18px; color: #757575; }
.card h2 { font: bold 28px/32px "Liberation Serif", serif; color: #cc1034; margin: 3px 0 17px; }
.card h2.green { color: #90ee90; }
.card h6 { font-size: 12.950px; line-height: 16px; color: #6c757d; }
.map-card { margin-top: 16px; background: #fff; border-radius: 20px; padding: 16px; height: 532px; }
.map { position: relative; width: 1361px; height: 500px; background: #aad3df; overflow: hidden; }
.world { width: 1361px; height: 500px; }
.land { fill: #f2efe9; }
.water { fill: #aad3df; }
.lakes { fill: none; stroke: #aad3df; stroke-width: 6; stroke-dasharray: 7 10 3 14 9 12; }
.borders path { fill: none; stroke: #c5adc2; stroke-width: 3; stroke-linejoin: round; }
.labels { font: 10.400px "Noto Sans", "DejaVu Sans", "Noto Sans CJK SC", sans-serif; letter-spacing: .45px; fill: #7b5a80; stroke: #fff; stroke-opacity: .75; stroke-width: 2.500px; paint-order: stroke; text-anchor: middle; }
.labels .sea { fill: #7d8fc0; font-style: italic; stroke-opacity: .2; }
.markers { fill: #cc1034; fill-opacity: .4; stroke: #cc1034; stroke-width: 3; }
.zoom { position: absolute; left: 10px; top: 10px; width: 26px; background: #fff; border-radius: 4px; box-shadow: 0 1px 5px rgba(0,0,0,.65); }
.zoom span { display: block; height: 26px; text-align: center; font: bold 18px/27px "Liberation Mono", monospace; color: #000; }
.zoom span + span { border-top: 1px solid #ccc; height: 27px; }
.attribution { position: absolute; right: 0; bottom: 0; background: rgba(255,255,255,.7); padding: 0 5px; font-size: 11.050px; line-height: 16px; color: #333; }
.attribution a { color: #0078a8; }

.panel { width: 332px; height: 764px; padding: 16px; }
h3 { font: bold 18.720px/22px "Liberation Serif", serif; color: #212121; }
.scroller { margin-top: 20px; width: 300px; height: 400px; display: grid; grid-template: 383px 17px / 283px 17px; }
.rows { overflow: hidden; font: 16px "Liberation Serif", serif; color: #6a5d5d; }
.rows div { height: 34px; display: flex; justify-content: space-between; align-items: center; padding: 0 8px; }
.rows div:nth-child(odd) { background: #f3f2f8; }
.vbar { background: #f1f1f1; display: flex; flex-direction: column; align-items: center; padding: 7px 0; }
.vbar i { width: 13px; height: 18px; background: #c1c1c1; margin: 6px 0 auto; }
.hbar { background: #f1f1f1; display: flex; justify-content: space-between; align-items: center; padding: 0 6px; }
.corner { background: #dcdcdc; }
.chart-title { margin-top: 20px; }
.chart { width: 300px; height: 150px; margin-top: 17px; }

.downloads { height: 57px; background: #353535; border-top: 1px solid #222; display: flex; align-items: center; padding: 0 12px 0 21px; }
.file { margin: 0 20px 0 14px; width: 139px; font-size: 12.500px; letter-spacing: -.18px; white-space: nowrap; }
.sep { width: 1px; height: 44px; background: #6b6b6b; margin-left: 18px; }
.downloads button { margin-left: auto; width: 78px; height: 32px; font: 600 12px "Open Sans", sans-serif; letter-spacing: -.2px; color: #fff; background: #404040; border: 1px solid #d5d5d5; border-radius: 4px; padding: 0 0 2px; margin-bottom: 2px; }
.dismiss { width: 11px; height: 11px; margin: 0 0 2px 13px; color: #bbb; }
.taskbar { height: 40px; display: flex; background: linear-gradient(90deg, #20373f, #22383f 35%, #1d3040 75%, #1b2942 88%, #1a2644); }
.task { width: 48px; display: flex; align-items: center; justify-content: center; position: relative; }
.task.open { width: 49px; }
.task.open:nth-child(5) { margin-left: 2px; }
.task.open::after { content: ""; position: absolute; left: 4px; right: 4px; bottom: 0; height: 2px; background: #76b9ed; }
.task.multi::after { border-right: 8px solid #5587ad; }
.task.current { background: #4d626b; }
.task.current::after { left: 0; right: 0; }
.tray { margin-left: auto; display: flex; align-items: center; gap: 12px; padding-right: 4px; }
.tray > svg + svg { margin-right: -4px; }
.clock { width: 64px; text-align: center; line-height: 18px; font-size: 11.800px; letter-spacing: -.15px; padding-bottom: 2px; margin-right: -4px; }
.notice { position: relative; width: 36px; height: 40px; border-right: 1px solid #66758a; padding: 12px 0 0; margin-left: 0; }
.notice b { position: absolute; left: 7px; top: 19px; width: 16px; height: 16px; border-radius: 8px; border: 1px solid #888; background: #2f3438; font-size: 10px; line-height: 14px; text-align: center; }
```
FILE: map.js
```js
const NS = 'http://www.w3.org/2000/svg';
const SX = 3, SY = 2.9037;

// Each sheet has its own left edge; points inside are [x, y, radius, vertical radius].
const sheets = {
  70: [[388,764,658,692],[422.5,338.5,168.5],[303,1202,151],[1081,719,3],[938,1032,3],[746,1183,13],[678,1233,13],[669,1268,3],[720,1290,16],[821,1226,3],[837,1276,52],[807,1276,13],[503,1337,46],[529,1306,13],[525,1366,26],[566,1345,43],[592,1380,7],[610,1430,50],[678,1448,55],[816,1532,147],[916,1464,43],[942,1286,3],[966,1294,6],[972,1304,3],[992,1325,14],[985,1308,3],[1002,1352,10],[999,1375,4],[1027,1378,3],[990,1395,3],[1002,1413,10],[849,1386,8],[866,1394,8],[878,1394,4],[1103,1776,336],[1037,1513,10]],
  540: [[325,171,22],[514,282,7],[598,498,288],[889,272,147],[803,280,56],[1077,208,50],[1077,382,34],[1043,473,67],[1061,447,37],[975,568,214],[1181,653,176],[1110,557,81],[1232,882,217],[497,559,58],[565,859,213],[497,883,94],[548,1037,94],[787,998,50],[685,1114,44],[924,1169,43],[1145,1133,49],[1375,831,73],[1398,875,62],[1384,1015,113],[1402,1169,82],[1230,1043,92],[1247,1053,73],[1245,1010,63],[1235,1030,48],[1195,977,17],[1283,977,19],[411,1179,3],[428,1260,17],[223,1328,17],[350,1372,9],[376,1396,6],[394,1363,20],[463,1414,17],[437,1456,6],[471,1490,6],[565,1311,10],[769,1328,6],[598,1380,10],[548,1463,19],[599,1463,32],[653,1465,6],[671,1439,6],[769,1430,35],[838,1498,22],[957,1345,6],[1145,1346,19],[991,1481,9],[1167,1484,6],[1298,1346,3],[1367,1405,10],[1281,1464,44]],
  1000: [[958,278,407,407],[568,1229,410,413],[414,688,71],[345,851,46],[534,851,46],[465,896,19],[361,1018,35],[448,1073,94],[158,1033,154],[687,1112,70],[789,1186,94],[797,1124,5],[926,1223,46],[1045,978,47],[1045,740,7],[1201,1219,14],[1318,1197,5],[1059,1241,7],[1045,1294,5],[960,1346,9],[1045,1380,5],[1333,1379,83],[635,1481,22],[66,863,70],[68,1087,55],[120,1160,45],[127,1158,52],[175,1188,60],[227,1241,50],[72,1346,6],[89,1430,10]]
};

// Central Europe, drawn on an even three-to-one grid.
const europe = [[245,315,163],[232,340,136],[190,466,278],[325,217,73],[374,551,231],[300,345,230],[421,386,141],[290,468,118],[381,460,108],[495,465,98],[487,434,72],[577,495,139],[650,467,64],[577,562,77],[512,535,88],[415,510,72],[400,490,50],[455,530,55],[530,592,45],[520,575,45],[492,600,48],[480,575,36],[528,652,60],[402,724,17],[280,545,4],[366,548,8],[366,591,4],[257,400,40],[180,577,17],[117,415,5],[75,274,3],[307,470,5]];

const markers = document.getElementById('markers');
function ellipse(cx, cy, rx, ry) {
  const e = document.createElementNS(NS, 'ellipse');
  Object.entries({ cx, cy, rx, ry }).forEach(([k, v]) => e.setAttribute(k, v.toFixed(1)));
  markers.append(e);
}
for (const [left, points] of Object.entries(sheets)) {
  for (const [x, y, r, ry] of points) ellipse(+left + x / SX, 350 + y / SY, r / SX, ry ? ry / SY : r / SX);
}
for (const [x, y, r] of europe) ellipse(700 + x / 3, 440 + y / 3, r / 3, r / 3);

const labels = [
  [260,474,'Hudson','sea'],[260,486,'Bay','sea'],[187,671,'United States'],[169,764,'México'],
  [643.500,413.500,'Ísland'],[904,409,'Suomi'],[840,440,'Sverige'],[728,520,'United Kingdom'],[911,540,'Беларусь'],[942,588,'Україна'],
  [807,562,'Deutschland'],[763,601,'France'],[734,655,'España'],[829,640,'Italia'],[953,662,'Türkiye'],[883,668,'Ελλάς'],
  [755,723,'Algérie /'],[751,735,'ⵍⵣⵣⴰⵢⴻⵔ /'],[755,747,'الجزائر'],[850,747,'ليبيا'],[920,744,'مصر'],[685,781,'موريتانيا'],
  [747,801,'Mali'],[808,801.500,'Niger'],[857,814,'Tchad تشاد'],[921,814,'السودان'],[796,853,'Nigeria'],[916,859,'South Sudan'],[973,852,'ኢትዮጵያ'],[1018,868,'Soomaaliya'],
  [991,704,'العراق'],[1001,761,'السعودية'],[1058,708,'ایران'],[1020,814,'اليمن'],[1076,783,'عمان'],[1125,698,'افغانستان'],[1150,722,'پاکستان'],
  [1130,588,'Қазақстан'],[1112,644,'Oʻzbekiston'],[1084,662,'Türkmenistan'],[1350,583,'Монгол'],[1350,599,'улс ᠮᠣᠩᠭᠣᠯ'],[1349,614,'ᠤᠯᠤᠰ'],
  [1309.500,672,'中国'],[1294,794,'မြန်မာ'],[1324,829,'ประเทศไทย'],[1366,813,'Việt Nam'],[1447,828,'Philippines']
];
const layer = document.getElementById('labels');
for (const [x, y, name, cls] of labels) {
  const t = document.createElementNS(NS, 'text');
  t.setAttribute('x', x);
  t.setAttribute('y', y);
  if (cls) t.setAttribute('class', cls);
  t.textContent = name;
  layer.append(t);
}
```
